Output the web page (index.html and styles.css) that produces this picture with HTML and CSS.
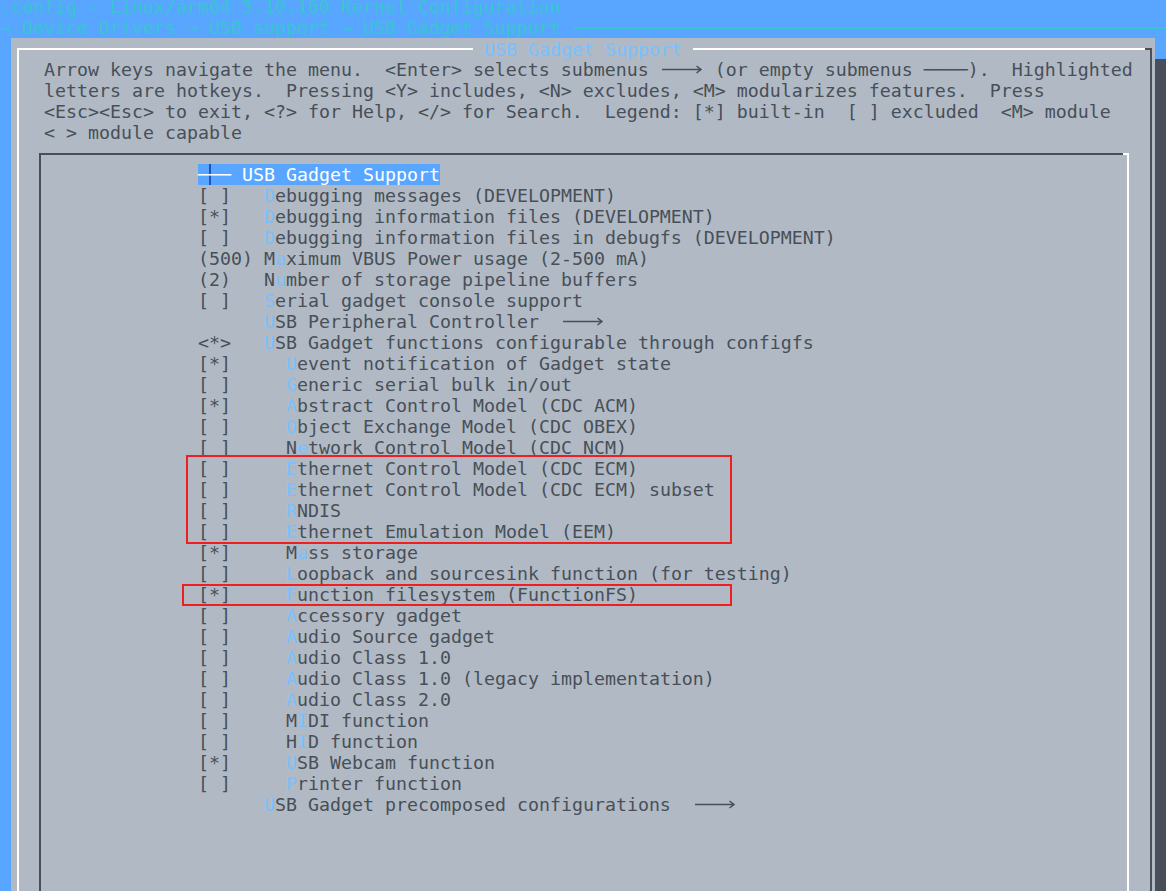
FILE: index.html
```html
<!DOCTYPE html>
<html lang="en">
<head>
<meta charset="utf-8">
<title>USB Gadget Support - menuconfig</title>
<link rel="stylesheet" href="styles.css">
</head>
<body>
<div class="screen">
  <div class="trow cyan">.config - Linux/arm64 5.10.160 Kernel Configuration</div>
  <div class="trow crumbs"><span class="cyan">→ Device Drivers → USB support → USB Gadget Support</span><span class="crumb-line"></span></div>
  <div class="main">
    <div class="gutter"></div>
    <div class="dialog">
      <div class="frame">
        <div class="ftop"><span class="fline white lead"></span><span class="dtitle"> USB Gadget Support </span><span class="fline white grow"></span><span class="fline dark corner"></span></div>
        <div class="help">
          <div class="row">Arrow keys navigate the menu.  &lt;Enter&gt; selects submenus <span class="arr"><svg width="44" height="21" viewBox="0 0 44 21"><path d="M2 10.5H41M36.5 7L41 10.5L36.5 14" /></svg></span> (or empty submenus ────).  Highlighted</div>
          <div class="row">letters are hotkeys.  Pressing &lt;Y&gt; includes, &lt;N&gt; excludes, &lt;M&gt; modularizes features.  Press</div>
          <div class="row">&lt;Esc&gt;&lt;Esc&gt; to exit, &lt;?&gt; for Help, &lt;/&gt; for Search.  Legend: [*] built-in  [ ] excluded  &lt;M&gt; module</div>
          <div class="row">&lt; &gt; module capable</div>
        </div>
        <div class="ibox">
          <div class="ibtop"><span class="fline dark grow"></span><span class="fline white icorner"></span></div>
          <div class="menu">
            <div class="row"><span class="hl">─<span class="cur">─</span>─ USB Gadget Support</span></div>
            <div class="row">[ ]   <span class="hk">D</span>ebugging messages (DEVELOPMENT)</div>
            <div class="row">[*]   <span class="hk">D</span>ebugging information files (DEVELOPMENT)</div>
            <div class="row">[ ]   <span class="hk">D</span>ebugging information files in debugfs (DEVELOPMENT)</div>
            <div class="row">(500) M<span class="hk">a</span>ximum VBUS Power usage (2-500 mA)</div>
            <div class="row">(2)   N<span class="hk">u</span>mber of storage pipeline buffers</div>
            <div class="row">[ ]   <span class="hk">S</span>erial gadget console support</div>
            <div class="row">      <span class="hk">U</span>SB Peripheral Controller  <span class="arr"><svg width="44" height="21" viewBox="0 0 44 21"><path d="M2 10.5H41M36.5 7L41 10.5L36.5 14" /></svg></span></div>
            <div class="row">&lt;*&gt;   <span class="hk">U</span>SB Gadget functions configurable through configfs</div>
            <div class="row">[*]     <span class="hk">U</span>event notification of Gadget state</div>
            <div class="row">[ ]     <span class="hk">G</span>eneric serial bulk in/out</div>
            <div class="row">[*]     <span class="hk">A</span>bstract Control Model (CDC ACM)</div>
            <div class="row">[ ]     <span class="hk">O</span>bject Exchange Model (CDC OBEX)</div>
            <div class="row">[ ]     N<span class="hk">e</span>twork Control Model (CDC NCM)</div>
            <div class="row">[ ]     <span class="hk">E</span>thernet Control Model (CDC ECM)</div>
            <div class="row">[ ]     <span class="hk">E</span>thernet Control Model (CDC ECM) subset</div>
            <div class="row">[ ]     <span class="hk">R</span>NDIS</div>
            <div class="row">[ ]     <span class="hk">E</span>thernet Emulation Model (EEM)</div>
            <div class="row">[*]     M<span class="hk">a</span>ss storage</div>
            <div class="row">[ ]     <span class="hk">L</span>oopback and sourcesink function (for testing)</div>
            <div class="row">[*]     <span class="hk">F</span>unction filesystem (FunctionFS)</div>
            <div class="row">[ ]     <span class="hk">A</span>ccessory gadget</div>
            <div class="row">[ ]     <span class="hk">A</span>udio Source gadget</div>
            <div class="row">[ ]     <span class="hk">A</span>udio Class 1.0</div>
            <div class="row">[ ]     <span class="hk">A</span>udio Class 1.0 (legacy implementation)</div>
            <div class="row">[ ]     <span class="hk">A</span>udio Class 2.0</div>
            <div class="row">[ ]     M<span class="hk">I</span>DI function</div>
            <div class="row">[ ]     H<span class="hk">I</span>D function</div>
            <div class="row">[*]     <span class="hk">U</span>SB Webcam function</div>
            <div class="row">[ ]     <span class="hk">P</span>rinter function</div>
            <div class="row">      <span class="hk">U</span>SB Gadget precomposed configurations  <span class="arr"><svg width="44" height="21" viewBox="0 0 44 21"><path d="M2 10.5H41M36.5 7L41 10.5L36.5 14" /></svg></span></div>
          </div>
        </div>
      </div>
    </div>
    <div class="shadow"></div>
  </div>
</div>
<div class="mark mark-a"></div>
<div class="mark mark-b"></div>
</body>
</html>
```
FILE: styles.css
```css
html, body {
  margin: 0;
  padding: 0;
}

body {
  position: relative;
  height: 891px;
  overflow: hidden;
  background: #58a6ff;
  color: #484f58;
  font-family: "DejaVu Sans Mono", "Liberation Mono", monospace;
  font-size: 18.27px;
  line-height: 21px;
}

.screen {
  margin-top: -4px;
}

.trow {
  height: 21px;
  white-space: pre;
}

.cyan {
  color: #39c5cf;
}

.crumbs {
  display: flex;
  align-items: center;
}

.crumb-line {
  flex: 1;
  height: 2px;
  margin-left: 12px;
  background: #39c5cf;
}

.main {
  display: flex;
  align-items: flex-start;
}

.gutter {
  flex: none;
  width: 11px;
}

.dialog {
  flex: none;
  width: 1144px;
  height: 870px;
  box-sizing: border-box;
  padding: 10px 3px 0 6px;
  background: #b1bac4;
  display: flex;
  flex-direction: column;
}

.shadow {
  flex: none;
  width: 11px;
  height: 870px;
  margin-top: 21px;
  background: #484f58;
}

.frame {
  flex: 1;
  display: flex;
  flex-direction: column;
  border-left: 2px solid #ffffff;
  border-right: 2px solid #484f58;
}

.ftop {
  display: flex;
  align-items: center;
  height: 2px;
  margin: 0 -2px;
}

.fline {
  display: block;
  height: 2px;
}

.fline.white {
  background: #ffffff;
}

.fline.dark {
  background: #484f58;
}

.fline.grow {
  flex: 1;
}

.fline.lead {
  flex: none;
  width: 456px;
}

.fline.corner {
  flex: none;
  width: 7px;
}

.fline.icorner {
  flex: none;
  width: 6px;
}

.dtitle {
  flex: none;
  white-space: pre;
  line-height: 21px;
  color: #79c0ff;
}

.help {
  margin-top: 9px;
  padding-left: 25px;
}

.row {
  height: 21px;
  white-space: pre;
}

.arr {
  display: inline-block;
  width: 44px;
  height: 21px;
  vertical-align: top;
}

.arr svg {
  display: block;
}

.arr path {
  fill: none;
  stroke: #484f58;
  stroke-width: 1.5;
}

.ibox {
  flex: 1;
  margin: 10px 21px 0 20px;
  border-left: 2px solid #484f58;
  border-right: 2px solid #ffffff;
}

.ibtop {
  display: flex;
  height: 2px;
  margin: 0 -2px;
}

.menu {
  padding-top: 9px;
  padding-left: 157px;
}

.hl {
  background: #58a6ff;
  color: #ffffff;
}

.cur {
  box-shadow: inset 2px 0 0 #2451b3;
}

.hk {
  color: #79c0ff;
}

.mark {
  position: absolute;
  box-sizing: border-box;
  border: 2px solid #f01e1e;
}

.mark-a {
  left: 186px;
  top: 455px;
  width: 546px;
  height: 89px;
}

.mark-b {
  left: 182px;
  top: 584px;
  width: 550px;
  height: 22px;
}
```
